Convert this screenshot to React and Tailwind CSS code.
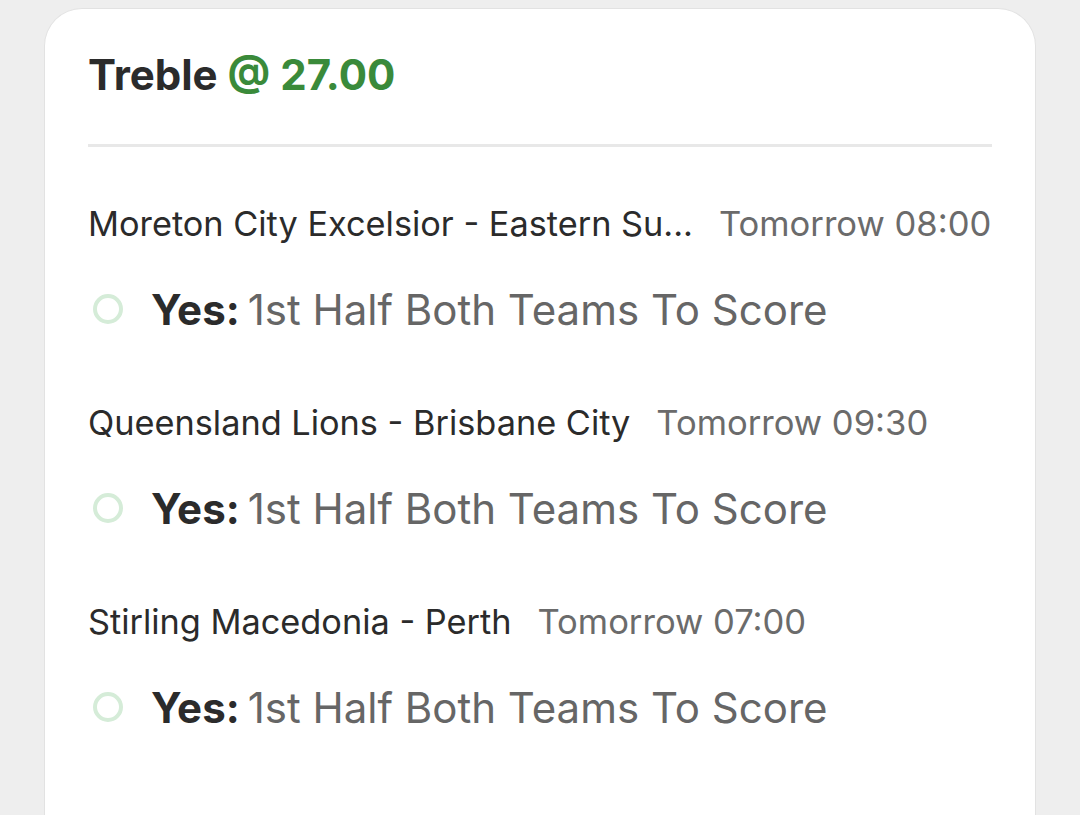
import React from "react";

const legs = [
  { match: "Moreton City Excelsior - Eastern Su...", time: "Tomorrow 08:00" },
  { match: "Queensland Lions - Brisbane City", time: "Tomorrow 09:30" },
  { match: "Stirling Macedonia - Perth", time: "Tomorrow 07:00" },
];

const Leg = ({ leg }) => (
  <div className="flex flex-col">
    <div className="flex items-center gap-[26px] h-[60px]">
      <span className="text-[34.3px] text-[#2b2b2b] whitespace-nowrap">{leg.match}</span>
      <span className="text-[34.6px] text-[#6b6b6b] whitespace-nowrap shrink-0">{leg.time}</span>
    </div>
    <div className="flex items-center h-[60px] mt-[25px]">
      <div className="w-[30px] h-[30px] rounded-full border-[4px] border-[#d5ecd8] ml-[5px] mr-[28px] shrink-0" />
      <span className="text-[42px] font-bold text-[#2b2b2b] mr-[8px]">Yes:</span>
      <span className="text-[42px] text-[#666666] whitespace-nowrap">1st Half Both Teams To Score</span>
    </div>
  </div>
);

export default function App() {
  return (
    <div className="min-h-[815px] bg-[#eeeeee] px-[44px] pt-[8px]" style={{ fontFamily: "Inter, 'Noto Sans', sans-serif" }}>
      <div className="bg-white rounded-t-[38px] border border-[#e2e2e2] border-b-0 min-h-[807px] px-[43px] pt-[46px]">
        <h2 className="text-[42px] font-bold leading-[40px] text-[#2b2b2b]">
          Treble <span className="text-[#3a8a3a]">@ 27.00</span>
        </h2>
        <div className="h-[3px] bg-[#e8e8e8] mt-[49px]" />
        <div className="flex flex-col gap-[54px] mt-[47px]">
          {legs.map((leg) => (
            <Leg key={leg.match} leg={leg} />
          ))}
        </div>
      </div>
    </div>
  );
}
